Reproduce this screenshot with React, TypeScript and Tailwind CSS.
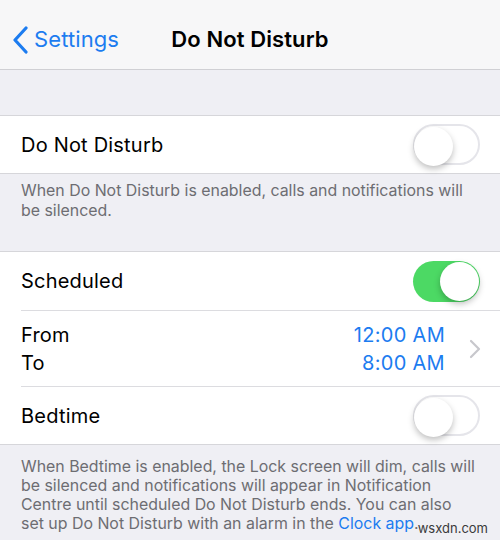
function Toggle({ on }: { on: boolean }) {
    return (
        <div
            className={`relative w-[67px] h-[41px] rounded-full ${
                on ? "bg-[#4cd964]" : "bg-white border-[2px] border-[#e5e5ea]"
            }`}
        >
            <div
                className={`absolute top-[1px] w-[39px] h-[39px] rounded-full bg-white shadow-[0_3px_6px_rgba(0,0,0,0.25)] ${
                    on ? "right-[1px]" : "left-[-1px] top-[-1px]"
                }`}
            />
        </div>
    );
}

export default function App() {
    return (
        <div className="w-[500px] h-[540px] overflow-hidden bg-[#efeff4] font-['Inter','Liberation_Sans',sans-serif] text-black">
            {/* nav bar */}
            <div className="h-[70px] pt-[10px] bg-[#f7f7f8] border-b border-[#d0d0d4] grid grid-cols-[1fr_auto_1fr] items-center">
                <div className="flex items-center pl-[11px] text-[#1c7cf0]">
                    <svg width="19" height="28" viewBox="0 0 19 28" fill="none">
                        <path d="M15 2 L4 14 L15 26" stroke="currentColor" strokeWidth="3.2" strokeLinecap="round" strokeLinejoin="round" />
                    </svg>
                    <span className="text-[22px] ml-[4px] tracking-[0.1px]">Settings</span>
                </div>
                <h1 className="text-[22px] font-semibold tracking-[0.1px]">Do Not Disturb</h1>
                <div />
            </div>

            <div className="h-[45px]" />

            {/* do not disturb */}
            <div className="bg-white border-y border-[#d6d6da]">
                <div className="h-[57px] flex items-center justify-between pl-[21px] pr-[20px]">
                    <span className="text-[20px] tracking-[0.2px]">Do Not Disturb</span>
                    <Toggle on={false} />
                </div>
            </div>
            <p className="px-[21px] pt-[7px] text-[15.9px] leading-[20px] text-[#6d6d72] h-[77px]">
                When Do Not Disturb is enabled, calls and notifications will be silenced.
            </p>

            {/* schedule */}
            <div className="bg-white border-y border-[#d6d6da]">
                <div className="h-[58px] flex items-center justify-between pl-[21px] pr-[20px]">
                    <span className="text-[20px] tracking-[0.2px]">Scheduled</span>
                    <Toggle on={true} />
                </div>
                <div className="ml-[21px] border-t border-[#dcdce0]" />
                <div className="h-[75px] flex items-center pl-[21px] pr-[19px]">
                    <div className="flex-1 text-[20px] leading-[28px] tracking-[0.2px]">
                        <div>From</div>
                        <div>To</div>
                    </div>
                    <div className="text-[20px] leading-[28px] text-right text-[#1c7cf0] tracking-[0.3px]">
                        <div>12:00 AM</div>
                        <div>8:00 AM</div>
                    </div>
                    <svg width="12" height="20" viewBox="0 0 12 20" fill="none" className="ml-[24px] mt-[1px]">
                        <path d="M2 2 L10 10 L2 18" stroke="#c7c7cc" strokeWidth="2.2" strokeLinecap="round" strokeLinejoin="round" />
                    </svg>
                </div>
                <div className="ml-[21px] border-t border-[#dcdce0]" />
                <div className="h-[57px] flex items-center justify-between pl-[21px] pr-[20px]">
                    <span className="text-[20px] tracking-[0.2px]">Bedtime</span>
                    <Toggle on={false} />
                </div>
            </div>
            <div className="relative">
                <p className="px-[21px] pt-[12px] text-[15.9px] leading-[19px] text-[#6d6d72]">
                    When Bedtime is enabled, the Lock screen will dim, calls will be silenced and notifications will appear in Notification Centre until scheduled Do Not Disturb ends. You can also
                    <br />
                    set up Do Not Disturb with an alarm in the{" "}
                    <span className="text-[#1c7cf0]">Clock app</span>.
                </p>
                <span className="absolute right-[12px] top-[74px] text-[13px] text-[#3a3a3a]">wsxdn.com</span>
            </div>
        </div>
    );
}
